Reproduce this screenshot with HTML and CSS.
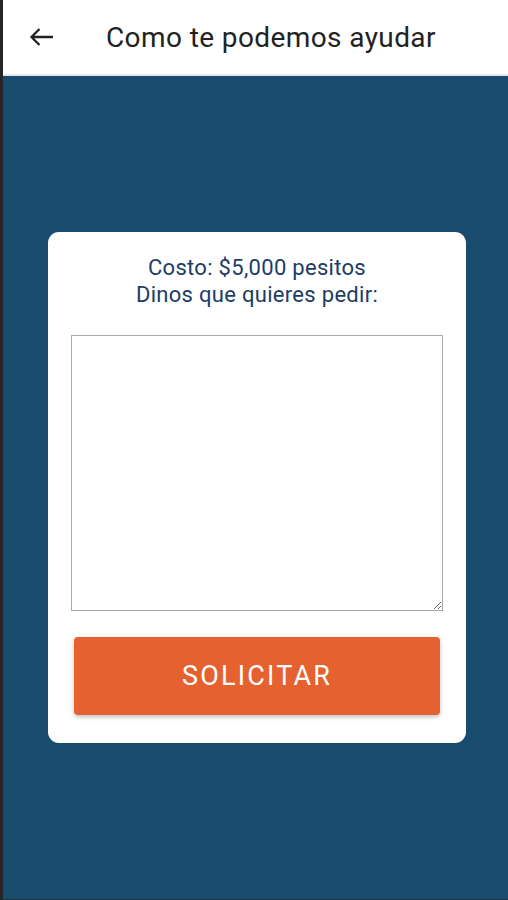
FILE: index.html
```html
<!DOCTYPE html>
<html lang="es">
<head>
    <meta charset="UTF-8">
    <meta name="viewport" content="width=device-width, initial-scale=1.0">
    <title>Como te podemos ayudar</title>
    <link rel="stylesheet" href="styles.css">
</head>
<body>

    <div class="app">
        <header class="top-bar">
            <button class="back-btn" type="button" aria-label="Volver">
                <svg width="26" height="22" viewBox="0 0 26 22">
                    <path d="M2.5 11H24M10.5 3L2.5 11l8 8" fill="none" stroke="#222" stroke-width="2.3"/>
                </svg>
            </button>
            <h1 class="title">Como te podemos ayudar</h1>
        </header>

        <main class="content">
            <form class="card" name="requestForm" onsubmit="return false;">
                <p class="card-text">
                    Costo: $5,000 pesitos<br>
                    Dinos que quieres pedir:
                </p>
                <textarea class="request-box" name="request"></textarea>
                <button class="submit-btn" type="submit">SOLICITAR</button>
            </form>
        </main>
    </div>

</body>
</html>
```

FILE: styles.css
```css
body {
    margin: 0;
    padding: 0;
    font-family: Roboto, "Liberation Sans", Arial, sans-serif;
    background-color: #194b6e;
}

.app {
    height: 900px;
    box-sizing: border-box;
    border-left: 3px solid #262626;
    border-bottom: 1px solid #1f3340;
    display: flex;
    flex-direction: column;
}

.top-bar {
    height: 74px;
    background-color: #fff;
    border-bottom: 2px solid #e4e6ea;
    display: flex;
    align-items: center;
    flex-shrink: 0;
}

.back-btn {
    background: none;
    border: none;
    padding: 0;
    margin-left: 26px;
    width: 26px;
    height: 22px;
    display: flex;
}

.title {
    margin: 0 0 0 51px;
    font-size: 28px;
    font-weight: 400;
    color: #222;
    letter-spacing: 0.4px;
}

.content {
    flex: 1;
    display: flex;
    align-items: center;
    padding: 0 42px 0 45px;
}

.card {
    flex: 1;
    background-color: #fff;
    border-radius: 11px;
    padding: 22px 23px 28px;
    display: flex;
    flex-direction: column;
    align-items: center;
}

.card-text {
    margin: 0 0 27px;
    text-align: center;
    font-size: 22px;
    line-height: 27px;
    letter-spacing: 0.3px;
    color: #1c3c66;
}

.request-box {
    width: 100%;
    height: 276px;
    box-sizing: border-box;
    border: 1px solid #a9a9a9;
    margin: 0;
    font-family: inherit;
}

.submit-btn {
    width: 366px;
    height: 78px;
    margin-top: 26px;
    background-color: #e5612f;
    border: none;
    border-radius: 4px;
    box-shadow: 0 2px 4px rgba(0, 0, 0, 0.25);
    color: #fff;
    font-family: inherit;
    font-size: 27px;
    letter-spacing: 2.2px;
    cursor: pointer;
}
```
